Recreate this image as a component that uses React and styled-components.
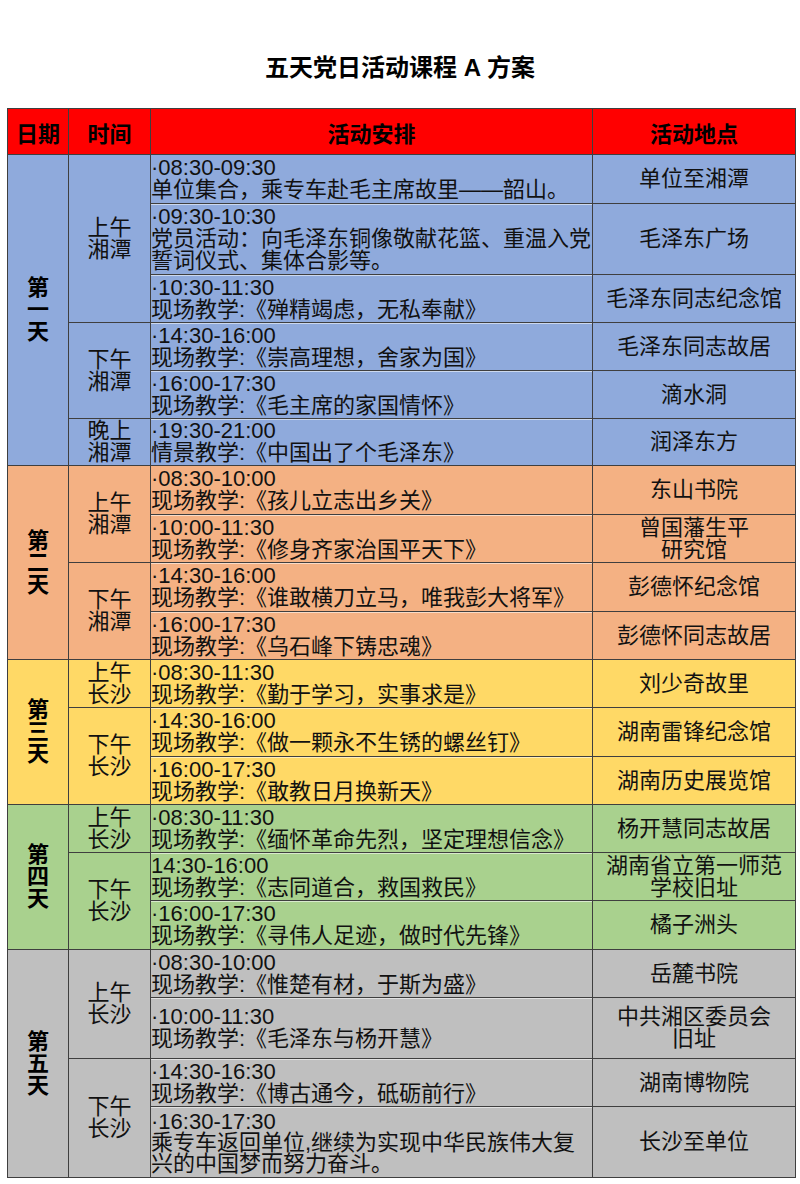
import React from 'react'
import styled, { createGlobalStyle } from 'styled-components'

const GlobalStyle = createGlobalStyle`
*{
  box-sizing:border-box;
}
body{
  margin:0;
  background:#fff;
  color:#111;
  font-family:"Liberation Sans","Noto Sans CJK SC",sans-serif;
}
`;

const LINE = '1px solid #3f3f3f';

const Page = styled.div`
width:800px;
padding-bottom:7px;
`;

const Title = styled.h1`
margin:0;
padding:53px 0 25px;
line-height:30px;
font-size:24px;
font-weight:700;
text-align:center;
color:#000;
`;

const Table = styled.div`
margin-left:7px;
width:789px;
border-top:${LINE};
border-left:${LINE};
font-size:22px;
`;

const HeaderRow = styled.div`
display:flex;
height:46px;
background:#ff0000;
`;

const HeadCell = styled.div`
width:${p => p.$w}px;
border-right:${LINE};
border-bottom:${LINE};
display:flex;
align-items:center;
justify-content:center;
font-weight:700;
color:#000;
`;

const DayBlock = styled.div`
display:flex;
background:${p => p.$bg};
`;

const DateCell = styled.div`
width:61px;
border-right:${LINE};
border-bottom:${LINE};
display:flex;
flex-direction:column;
align-items:center;
justify-content:center;
font-weight:700;
line-height:22px;
color:#000;
`;

const Column = styled.div`
display:flex;
flex-direction:column;
`;

const SlotRow = styled.div`
display:flex;
`;

const TimeCell = styled.div`
width:82px;
border-right:${LINE};
border-bottom:${LINE};
display:flex;
flex-direction:column;
align-items:center;
justify-content:center;
line-height:22px;
`;

const ItemRow = styled.div`
display:flex;
height:${p => p.$h}px;
`;

const ActCell = styled.div`
width:442px;
border-right:${LINE};
border-bottom:${LINE};
display:flex;
flex-direction:column;
justify-content:center;
line-height:${p => p.$lh}px;
white-space:nowrap;
box-shadow:${p => (p.$first ? 'none' : 'inset 0 1px 0 rgba(255,255,255,.55)')};
`;

const PlaceCell = styled.div`
width:203px;
border-right:${LINE};
border-bottom:${LINE};
display:flex;
flex-direction:column;
align-items:center;
justify-content:center;
text-align:center;
line-height:22px;
white-space:nowrap;
`;

const days = [
  {
    label: '第一天', bg: '#8faadc', slots: [
      { time: ['上午', '湘潭'], items: [
        { h: 49, lines: ['·08:30-09:30', '单位集合，乘专车赴毛主席故里——韶山。'], place: ['单位至湘潭'] },
        { h: 71, lines: ['·09:30-10:30', '党员活动：向毛泽东铜像敬献花篮、重温入党', '誓词仪式、集体合影等。'], place: ['毛泽东广场'] },
        { h: 48, lines: ['·10:30-11:30', '现场教学:《殚精竭虑，无私奉献》'], place: ['毛泽东同志纪念馆'] },
      ] },
      { time: ['下午', '湘潭'], items: [
        { h: 48, lines: ['·14:30-16:00', '现场教学:《崇高理想，舍家为国》'], place: ['毛泽东同志故居'] },
        { h: 48, lines: ['·16:00-17:30', '现场教学:《毛主席的家国情怀》'], place: ['滴水洞'] },
      ] },
      { time: ['晚上', '湘潭'], items: [
        { h: 47, lines: ['·19:30-21:00', '情景教学:《中国出了个毛泽东》'], place: ['润泽东方'] },
      ] },
    ],
  },
  {
    label: '第二天', bg: '#f4b183', slots: [
      { time: ['上午', '湘潭'], items: [
        { h: 49, lines: ['·08:30-10:00', '现场教学:《孩儿立志出乡关》'], place: ['东山书院'] },
        { h: 48, lines: ['·10:00-11:30', '现场教学:《修身齐家治国平天下》'], place: ['曾国藩生平', '研究馆'] },
      ] },
      { time: ['下午', '湘潭'], items: [
        { h: 49, lines: ['·14:30-16:00', '现场教学:《谁敢横刀立马，唯我彭大将军》'], place: ['彭德怀纪念馆'] },
        { h: 48, lines: ['·16:00-17:30', '现场教学:《乌石峰下铸忠魂》'], place: ['彭德怀同志故居'] },
      ] },
    ],
  },
  {
    label: '第三天', bg: '#ffd966', slots: [
      { time: ['上午', '长沙'], items: [
        { h: 48, lines: ['·08:30-11:30', '现场教学:《勤于学习，实事求是》'], place: ['刘少奇故里'] },
      ] },
      { time: ['下午', '长沙'], items: [
        { h: 49, lines: ['·14:30-16:00', '现场教学:《做一颗永不生锈的螺丝钉》'], place: ['湖南雷锋纪念馆'] },
        { h: 48, lines: ['·16:00-17:30', '现场教学:《敢教日月换新天》'], place: ['湖南历史展览馆'] },
      ] },
    ],
  },
  {
    label: '第四天', bg: '#a9d18e', slots: [
      { time: ['上午', '长沙'], items: [
        { h: 48, lines: ['·08:30-11:30', '现场教学:《缅怀革命先烈，坚定理想信念》'], place: ['杨开慧同志故居'] },
      ] },
      { time: ['下午', '长沙'], items: [
        { h: 48, lines: ['14:30-16:00', '现场教学:《志同道合，救国救民》'], place: ['湖南省立第一师范', '学校旧址'] },
        { h: 49, lines: ['·16:00-17:30', '现场教学:《寻伟人足迹，做时代先锋》'], place: ['橘子洲头'] },
      ] },
    ],
  },
  {
    label: '第五天', bg: '#bfbfbf', slots: [
      { time: ['上午', '长沙'], items: [
        { h: 48, lines: ['·08:30-10:00', '现场教学:《惟楚有材，于斯为盛》'], place: ['岳麓书院'] },
        { h: 61, lines: ['·10:00-11:30', '现场教学:《毛泽东与杨开慧》'], place: ['中共湘区委员会', '旧址'] },
      ] },
      { time: ['下午', '长沙'], items: [
        { h: 48, lines: ['·14:30-16:30', '现场教学:《博古通今，砥砺前行》'], place: ['湖南博物院'] },
        { h: 71, lh: 21, lines: ['·16:30-17:30', '乘专车返回单位,继续为实现中华民族伟大复', '兴的中国梦而努力奋斗。'], place: ['长沙至单位'] },
      ] },
    ],
  },
];

const heads = [
  { w: 61, t: '日期' },
  { w: 82, t: '时间' },
  { w: 442, t: '活动安排' },
  { w: 203, t: '活动地点' },
];

const App = () => {
  return (
    <Page>
      <GlobalStyle />
      <Title>五天党日活动课程 A 方案</Title>
      <Table>
        <HeaderRow>
          {heads.map(h => <HeadCell key={h.t} $w={h.w}>{h.t}</HeadCell>)}
        </HeaderRow>
        {days.map(day => (
          <DayBlock key={day.label} $bg={day.bg}>
            <DateCell>
              {day.label.split('').map((c, i) => <span key={i}>{c}</span>)}
            </DateCell>
            <Column>
              {day.slots.map((slot, si) => (
                <SlotRow key={si}>
                  <TimeCell>
                    {slot.time.map(t => <span key={t}>{t}</span>)}
                  </TimeCell>
                  <Column>
                    {slot.items.map((it, ii) => (
                      <ItemRow key={ii} $h={it.h}>
                        <ActCell $lh={it.lh || 22} $first={si === 0 && ii === 0}>
                          {it.lines.map((l, li) => <div key={li}>{l}</div>)}
                        </ActCell>
                        <PlaceCell>
                          {it.place.map(p => <div key={p}>{p}</div>)}
                        </PlaceCell>
                      </ItemRow>
                    ))}
                  </Column>
                </SlotRow>
              ))}
            </Column>
          </DayBlock>
        ))}
      </Table>
    </Page>
  );
}

export default App;
